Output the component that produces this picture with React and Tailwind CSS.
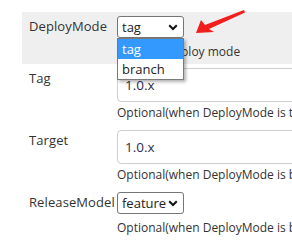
import React from "react";

function Chevron() {
  return (
    <svg width="10" height="7" viewBox="0 0 10 7" className="shrink-0">
      <polyline points="1.2,1.2 5,5 8.8,1.2" fill="none" stroke="#111" strokeWidth="2" />
    </svg>
  );
}

function FakeSelect({ value, width }) {
  return (
    <div
      className={`flex h-[22px] items-center justify-between rounded-[3px] border border-[#767676] bg-white pl-[4px] pr-[5px] text-[13px] leading-none text-[#222] ${width}`}
    >
      <span>{value}</span>
      <Chevron />
    </div>
  );
}

function Row({ label, children, className = "" }) {
  return (
    <div className={`flex ${className}`}>
      <div className="w-[95px] shrink-0 pl-[7px] text-[13px] leading-5 tracking-[0.1px] text-[#333] whitespace-nowrap">{label}</div>
      <div className="min-w-0 flex-1">{children}</div>
    </div>
  );
}

function Help({ children, className = "" }) {
  return <div className={`h-[18px] text-[12px] leading-[18px] text-[#333] whitespace-nowrap ${className}`}>{children}</div>;
}

function TextInput({ value }) {
  return (
    <div className="flex h-[34px] w-[200px] items-center rounded-[4px] border border-[#cfcfcf] bg-white pl-[7px] text-[13.5px] text-[#2f2a4a]">
      {value}
    </div>
  );
}

export default function App() {
  return (
    <div className="relative h-[240px] w-[292px] overflow-hidden bg-white font-['Segoe_UI','Open_Sans',sans-serif]">
      <div className="pl-[22px] pt-3">
        <Row label="DeployMode" className="bg-[#efefef] pt-1 pb-[3px]">
          <FakeSelect value="tag" width="w-[67px]" />
          <Help className="mt-[5px]">
            <span className="tracking-[-0.6px]">Select the de</span>ploy mode
          </Help>
        </Row>
        <Row label="Tag" className="mt-1">
          <TextInput value="1.0.x" />
          <Help className="mt-[2px]">Optional(when DeployMode is tag)</Help>
        </Row>
        <Row label="Target" className="mt-2">
          <TextInput value="1.0.x" />
          <Help className="mt-[2px]">Optional(when DeployMode is branch)</Help>
        </Row>
        <Row label="ReleaseModel" className="mt-2">
          <FakeSelect value="feature" width="w-[67px]" />
          <Help className="mt-[5px]">Optional(when DeployMode is branch)</Help>
        </Row>
      </div>

      {/* open dropdown list */}
      <div className="absolute left-[117px] top-[38px] w-[67px] border border-[#7a7a7a] bg-white text-[13px] leading-none text-[#222] shadow-[2px_2px_3px_rgba(0,0,0,0.3)]">
        <div className="flex h-[20px] items-center bg-[#3399ff] pl-[4px] text-white">tag</div>
        <div className="flex h-[20px] items-center pl-[4px]">branch</div>
      </div>

      {/* red annotation arrow */}
      <svg className="absolute left-0 top-0" width="292" height="240" viewBox="0 0 292 240">
        <polygon points="196,33 201,20 205,25 244,10 245,12.5 209,29 214,32" fill="#f21d1d" />
      </svg>
    </div>
  );
}
